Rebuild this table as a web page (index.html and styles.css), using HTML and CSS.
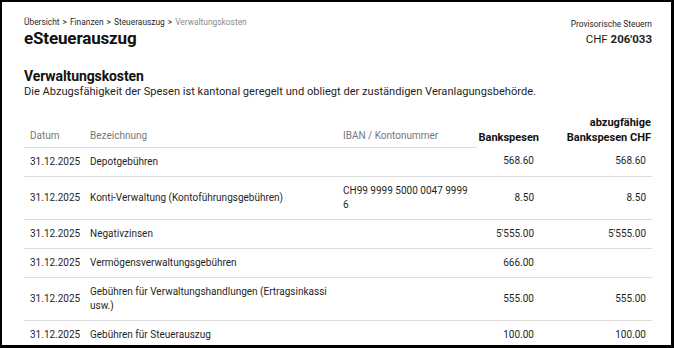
FILE: index.html
```html
<!DOCTYPE html>
<html lang="de">
<head>
<meta charset="utf-8">
<title>eSteuerauszug – Verwaltungskosten</title>
<link rel="stylesheet" href="styles.css">
</head>
<body>
<div class="frame">
  <header class="top">
    <div class="top-left">
      <nav class="crumbs">
        <span class="crumb">Übersicht</span><span class="sep">&gt;</span><span class="crumb">Finanzen</span><span class="sep">&gt;</span><span class="crumb">Steuerauszug</span><span class="sep">&gt;</span><span class="crumb current">Verwaltungskosten</span>
      </nav>
      <h1 class="title">eSteuerauszug</h1>
    </div>
    <div class="top-right">
      <div class="tax-label">Provisorische Steuern</div>
      <div class="tax-value">CHF <strong>206'033</strong></div>
    </div>
  </header>

  <section class="section">
    <h2 class="section-title">Verwaltungskosten</h2>
    <p class="section-desc">Die Abzugsfähigkeit der Spesen ist kantonal geregelt und obliegt der zuständigen Veranlagungsbehörde.</p>

    <table class="costs">
      <colgroup>
        <col class="c-date">
        <col class="c-name">
        <col class="c-iban">
        <col class="c-bank">
        <col class="c-deduct">
      </colgroup>
      <thead>
        <tr>
          <th class="h-muted">Datum</th>
          <th class="h-muted">Bezeichnung</th>
          <th class="h-muted">IBAN / Kontonummer</th>
          <th class="h-strong">Bankspesen</th>
          <th class="h-strong">abzugfähige<br>Bankspesen CHF</th>
        </tr>
      </thead>
      <tbody>
        <tr>
          <td>31.12.2025</td>
          <td>Depotgebühren</td>
          <td></td>
          <td class="num">568.60</td>
          <td class="num">568.60</td>
        </tr>
        <tr>
          <td>31.12.2025</td>
          <td>Konti-Verwaltung (Kontoführungsgebühren)</td>
          <td>CH99 9999 5000 0047 9999 6</td>
          <td class="num">8.50</td>
          <td class="num">8.50</td>
        </tr>
        <tr>
          <td>31.12.2025</td>
          <td>Negativzinsen</td>
          <td></td>
          <td class="num">5'555.00</td>
          <td class="num">5'555.00</td>
        </tr>
        <tr>
          <td>31.12.2025</td>
          <td>Vermögensverwaltungsgebühren</td>
          <td></td>
          <td class="num">666.00</td>
          <td class="num"></td>
        </tr>
        <tr>
          <td>31.12.2025</td>
          <td>Gebühren für Verwaltungshandlungen (Ertragsinkassi usw.)</td>
          <td></td>
          <td class="num">555.00</td>
          <td class="num">555.00</td>
        </tr>
        <tr>
          <td>31.12.2025</td>
          <td>Gebühren für Steuerauszug</td>
          <td></td>
          <td class="num">100.00</td>
          <td class="num">100.00</td>
        </tr>
      </tbody>
    </table>
  </section>
</div>
</body>
</html>
```

FILE: styles.css
```css
* {
  box-sizing: border-box;
}

html, body {
  margin: 0;
  padding: 0;
  background: #fff;
}

body {
  font-family: Roboto, "Liberation Sans", Arial, sans-serif;
  color: #1f1f1f;
}

.frame {
  width: 674px;
  height: 348px;
  overflow: hidden;
  border-style: solid;
  border-color: #000;
  border-width: 2px 3px 3px 2px;
  padding: 15px 19px 0 22px;
}

.top {
  display: flex;
  justify-content: space-between;
  align-items: flex-start;
}

.crumbs {
  font-size: 8.4px;
  line-height: 10px;
  color: #1f1f1f;
}

.sep {
  margin: 0 3px;
}

.crumb.current {
  color: #8a8a8a;
}

.title {
  margin: 0;
  font-size: 17px;
  line-height: 23px;
  font-weight: 700;
  letter-spacing: -0.15px;
  color: #111;
}

.top-right {
  margin-top: 2px;
  text-align: right;
}

.tax-label {
  font-size: 8.4px;
  line-height: 10px;
}

.tax-value {
  font-size: 11.5px;
  line-height: 20px;
}

.tax-value strong {
  font-weight: 700;
}

.section {
  margin-top: 18px;
}

.section-title {
  margin: 0;
  font-size: 14px;
  line-height: 17px;
  font-weight: 700;
  letter-spacing: -0.1px;
  color: #111;
}

.section-desc {
  margin: 0;
  font-size: 11.1px;
  line-height: 14px;
}

.costs {
  width: 628px;
  margin-top: 16px;
  border-collapse: collapse;
  table-layout: fixed;
  font-size: 10px;
}

.c-date { width: 60px; }
.c-name { width: 253px; }
.c-iban { width: 140px; }
.c-bank { width: 63px; }
.c-deduct { width: 112px; }

.costs th {
  vertical-align: bottom;
  text-align: left;
}

.h-muted {
  font-weight: 400;
  font-size: 10px;
  line-height: 14px;
  color: #777;
  padding: 0 6px 4px 6px;
  border-bottom: 1px solid #dcdcdc;
}

.h-strong {
  font-weight: 700;
  font-size: 11px;
  line-height: 15px;
  color: #111;
  text-align: right !important;
  padding: 0 1px 2px 0;
}

.costs td {
  padding: 7px 6px;
  line-height: 14px;
  vertical-align: middle;
  border-bottom: 1px solid #dcdcdc;
  color: #1f1f1f;
}

.costs td.num {
  text-align: right;
}
```
